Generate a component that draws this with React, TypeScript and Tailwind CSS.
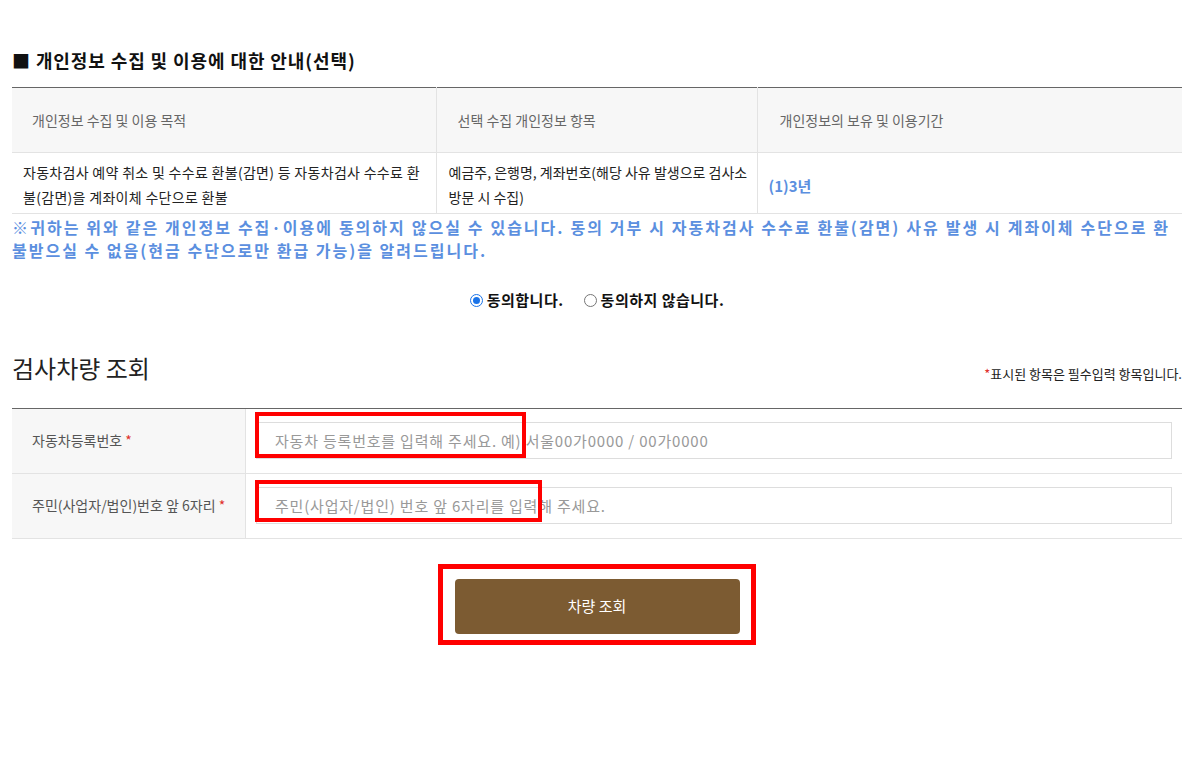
import React from 'react';

const font = { fontFamily: '"Noto Sans CJK KR", "Noto Sans", sans-serif' };

export default function App() {
    return (
        <div className="min-h-[774px] w-[1190px] bg-white text-[#222]" style={font}>
            <div className="relative ml-[12px] w-[1170px] pt-[47px]">
                {/* 개인정보 안내 */}
                <h3 className="text-[18px] font-bold leading-[26px] tracking-[0.9px] text-[#111]">■ 개인정보 수집 및 이용에 대한 안내(선택)</h3>

                <table className="mt-[14px] w-full table-fixed border-collapse border-t border-[#666]">
                    <colgroup>
                        <col className="w-[424px]" />
                        <col className="w-[321px]" />
                        <col />
                    </colgroup>
                    <thead>
                        <tr className="h-[65px] bg-[#f7f7f7] text-left text-[14px] font-normal text-[#666]">
                            <th className="border-b border-r border-[#e3e3e3] pl-[20px] font-normal">개인정보 수집 및 이용 목적</th>
                            <th className="border-b border-r border-[#e3e3e3] pl-[21px] font-normal">선택 수집 개인정보 항목</th>
                            <th className="border-b border-[#e3e3e3] pl-[22px] font-normal">개인정보의 보유 및 이용기간</th>
                        </tr>
                    </thead>
                    <tbody>
                        <tr className="h-[61px] text-[14px] leading-[25px] text-[#222]">
                            <td className="whitespace-nowrap border-b border-r border-[#e3e3e3] pl-[11px] pt-[3px] tracking-[0.3px]">
                                자동차검사 예약 취소 및 수수료 환불(감면) 등 자동차검사 수수료 환<br />
                                불(감면)을 계좌이체 수단으로 환불
                            </td>
                            <td className="whitespace-nowrap border-b border-r border-[#e3e3e3] pl-[12px] pt-[3px]">
                                예금주, 은행명, 계좌번호(해당 사유 발생으로 검사소<br />
                                방문 시 수집)
                            </td>
                            <td className="border-b border-[#e3e3e3] pl-[11px] pt-[4px] text-[15px] font-bold text-[#5b8fdf]">(1)3년</td>
                        </tr>
                    </tbody>
                </table>

                <div className="mt-[2px] pr-[12px] text-[16px] font-bold leading-[23px] tracking-[2px] text-[#5b8fdf]">
                    <p className="text-justify [text-align-last:justify]">
                        ※귀하는 위와 같은 개인정보 수집·이용에 동의하지 않으실 수 있습니다. 동의 거부 시 자동차검사 수수료 환불(감면) 사유 발생 시 계좌이체 수단으로 환
                    </p>
                    <p>불받으실 수 없음(현금 수단으로만 환급 가능)을 알려드립니다.</p>
                </div>

                <div className="mt-[27px] flex items-center justify-center gap-[20px] text-[15px] font-bold tracking-[0.5px] text-[#111]">
                    <label className="flex items-center gap-[4px]">
                        <span className="flex h-[13px] w-[13px] items-center justify-center rounded-full border border-[#1a73e8]">
                            <span className="h-[7px] w-[7px] rounded-full bg-[#1a73e8]" />
                        </span>
                        동의합니다.
                    </label>
                    <label className="flex items-center gap-[4px]">
                        <span className="h-[13px] w-[13px] rounded-full border border-[#767676] bg-white" />
                        동의하지 않습니다.
                    </label>
                </div>

                {/* 검사차량 조회 */}
                <div className="mt-[38px] flex items-end justify-between">
                    <h2 className="text-[24px] font-normal leading-[36px] text-[#222]">검사차량 조회</h2>
                    <p className="mb-[2px] text-[13px] text-[#222]">
                        <span className="text-[#e0302b]">*</span>표시된 항목은 필수입력 항목입니다.
                    </p>
                </div>

                <div className="mt-[22px] border-t border-[#666]">
                    <FormRow label="자동차등록번호" placeholder="자동차 등록번호를 입력해 주세요. 예) 서울00가0000 / 00가0000" />
                    <FormRow label="주민(사업자/법인)번호 앞 6자리" placeholder="주민(사업자/법인) 번호 앞 6자리를 입력해 주세요." />
                </div>

                <div className="mt-[40px] flex justify-center">
                    <button className="h-[55px] w-[285px] rounded-[4px] bg-[#7c5b32] text-[15px] text-white">차량 조회</button>
                </div>

                {/* annotation boxes */}
                <div className="pointer-events-none absolute left-[243px] top-[412px] h-[46px] w-[271px] border-[4px] border-[#ff0000]" />
                <div className="pointer-events-none absolute left-[243px] top-[480px] h-[42px] w-[287px] border-[4px] border-[#ff0000]" />
                <div className="pointer-events-none absolute left-[426px] top-[564px] h-[81px] w-[318px] border-[5px] border-[#ff0000]" />
            </div>
        </div>
    );
}

function FormRow({ label, placeholder }: { label: string; placeholder: string }) {
    return (
        <div className="flex h-[65px] border-b border-[#e3e3e3]">
            <div className="flex w-[234px] items-center border-r border-[#e3e3e3] bg-[#f7f7f7] pl-[20px] text-[14px] text-[#555]">
                {label}&nbsp;<span className="text-[#e0302b]">*</span>
            </div>
            <div className="flex flex-1 items-center px-[10px]">
                <input
                    className="h-[37px] w-full border border-[#ddd] px-[18px] text-[15px] tracking-[0.8px] outline-none placeholder:text-[#999]"
                    placeholder={placeholder}
                    style={font}
                />
            </div>
        </div>
    );
}
